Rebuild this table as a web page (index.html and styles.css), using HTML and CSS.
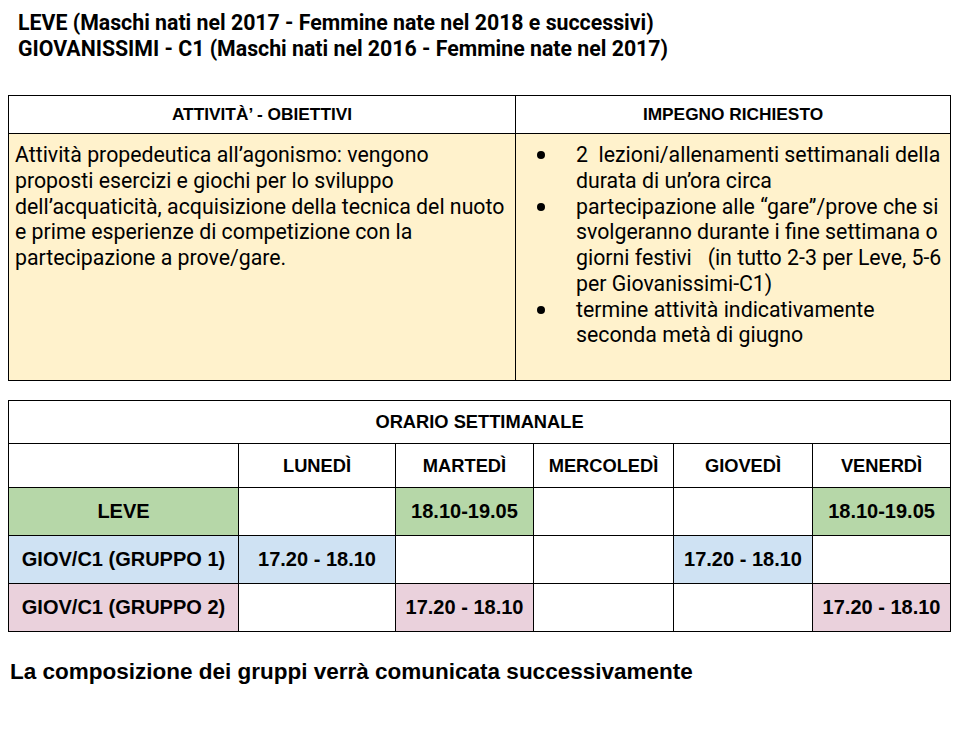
FILE: index.html
```html
<!DOCTYPE html>
<html lang="it">
<head>
<meta charset="utf-8">
<title>Leve e Giovanissimi</title>
<link rel="stylesheet" href="styles.css">
</head>
<body>
<div class="page">
  <div class="title">
    <div>LEVE (Maschi nati nel 2017 - Femmine nate nel 2018 e successivi)</div>
    <div>GIOVANISSIMI - C1 (Maschi nati nel 2016 - Femmine nate nel 2017)</div>
  </div>

  <table class="info">
    <colgroup><col class="c-left"><col class="c-right"></colgroup>
    <tr class="info-head">
      <th>ATTIVITÀ’ - OBIETTIVI</th>
      <th>IMPEGNO RICHIESTO</th>
    </tr>
    <tr class="info-body">
      <td class="desc">Attività propedeutica all’agonismo: vengono<br>proposti esercizi e giochi per lo sviluppo<br>dell’acquaticità, acquisizione della tecnica del nuoto<br>e prime esperienze di competizione con la<br>partecipazione a prove/gare.</td>
      <td class="req">
        <ul class="bullets">
          <li><span>2&nbsp; lezioni/allenamenti settimanali della<br>durata di un’ora circa</span></li>
          <li><span>partecipazione alle “gare”/prove che si<br>svolgeranno durante i fine settimana o<br>giorni festivi &nbsp; (in tutto 2-3 per Leve, 5-6<br>per Giovanissimi-C1)</span></li>
          <li><span>termine attività indicativamente<br>seconda metà di giugno</span></li>
        </ul>
      </td>
    </tr>
  </table>

  <table class="sched">
    <colgroup>
      <col class="s0"><col class="s1"><col class="s2"><col class="s3"><col class="s4"><col class="s5">
    </colgroup>
    <tr class="r-title"><th colspan="6">ORARIO SETTIMANALE</th></tr>
    <tr class="r-days">
      <th></th><th>LUNEDÌ</th><th>MARTEDÌ</th><th>MERCOLEDÌ</th><th>GIOVEDÌ</th><th>VENERDÌ</th>
    </tr>
    <tr class="r-data">
      <td class="green">LEVE</td><td></td><td class="green">18.10-19.05</td><td></td><td></td><td class="green">18.10-19.05</td>
    </tr>
    <tr class="r-data">
      <td class="blue">GIOV/C1 (GRUPPO 1)</td><td class="blue">17.20 - 18.10</td><td></td><td></td><td class="blue">17.20 - 18.10</td><td></td>
    </tr>
    <tr class="r-data">
      <td class="pink">GIOV/C1 (GRUPPO 2)</td><td></td><td class="pink">17.20 - 18.10</td><td></td><td></td><td class="pink">17.20 - 18.10</td>
    </tr>
  </table>

  <p class="note">La composizione dei gruppi verrà comunicata successivamente</p>
</div>
</body>
</html>
```

FILE: styles.css
```css
html, body {
  margin: 0;
  padding: 0;
  background: #ffffff;
  color: #000000;
}

.page {
  padding: 10px 8px 0 8px;
}

.title {
  font-family: Roboto, "Liberation Sans", sans-serif;
  font-weight: 700;
  font-size: 21.3px;
  line-height: 26px;
  padding-left: 10px;
}

table {
  border-collapse: collapse;
  table-layout: fixed;
  width: 942px;
}

th, td {
  border: 1px solid #000;
  padding: 0;
}

.info {
  margin-top: 33px;
}

.c-left { width: 507px; }
.c-right { width: 435px; }

.info-head th {
  height: 37px;
  font-family: "Liberation Sans", Arial, sans-serif;
  font-weight: bold;
  font-size: 17.3px;
  text-align: center;
  vertical-align: middle;
}

.info-body td {
  height: 238px;
  background: #fff2cc;
  vertical-align: top;
  font-family: Roboto, "Liberation Sans", sans-serif;
  font-weight: 400;
  font-size: 21.3px;
  line-height: 25.75px;
}

.desc {
  padding: 8px 6px 0 6px;
  white-space: nowrap;
}

.req {
  padding: 8px 6px 0 6px;
  white-space: nowrap;
}

.bullets {
  list-style: none;
  margin: 0;
  padding: 0;
}

.bullets li {
  display: grid;
  grid-template-columns: 54px 1fr;
}

.bullets li::before {
  content: "";
  width: 8px;
  height: 8px;
  border-radius: 50%;
  background: #000;
  margin: 9px 0 0 15px;
}

.sched {
  margin-top: 19px;
  font-family: "Liberation Sans", Arial, sans-serif;
  font-weight: bold;
  text-align: center;
}

.s0 { width: 230px; }
.s1 { width: 157px; }
.s2 { width: 138px; }
.s3 { width: 140px; }
.s4 { width: 139px; }
.s5 { width: 138px; }

.sched th, .sched td {
  text-align: center;
  vertical-align: middle;
}

.r-title th {
  height: 42px;
  font-size: 18.3px;
}

.r-days th {
  height: 43px;
  font-size: 18.3px;
}

.r-data td {
  height: 47px;
  font-size: 20px;
}

.green { background: #b6d7a8; }
.blue { background: #cfe2f3; }
.pink { background: #ead1dc; }

.note {
  margin: 27px 0 0 2px;
  font-family: "Liberation Sans", Arial, sans-serif;
  font-weight: bold;
  font-size: 22.5px;
  line-height: 26px;
}
```
